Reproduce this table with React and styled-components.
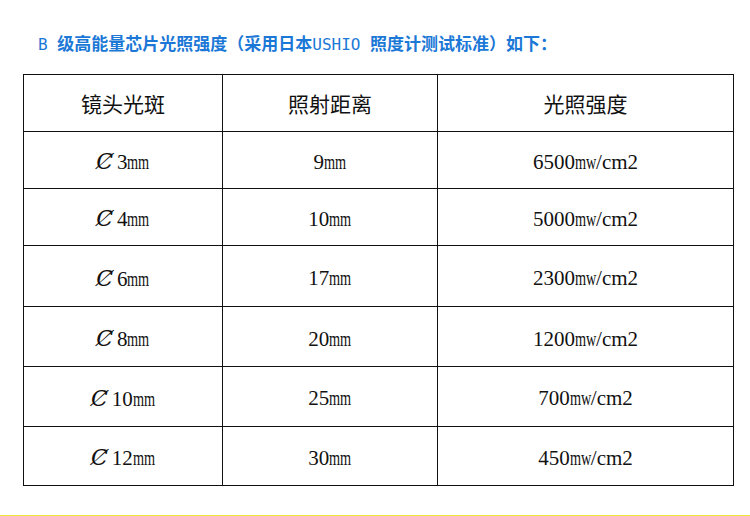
import styled, { createGlobalStyle } from "styled-components";

const GlobalStyle = createGlobalStyle`
  html, body {
    margin: 0;
    padding: 0;
    background: #fff;
  }
`;

const Page = styled.div`
  box-sizing: border-box;
  width: 750px;
  height: 516px;
  padding: 33px 0 0 0;
  border-bottom: 1px solid #f3e23a;
  display: flex;
  flex-direction: column;
`;

const Title = styled.h2`
  margin: 0 0 19px 38px;
  font-family: "Noto Sans CJK SC", sans-serif;
  font-size: 17px;
  line-height: 20px;
  font-weight: 600;
  color: #1b78d6;
  white-space: nowrap;
`;

const Latin = styled.span`
  font-family: "DejaVu Sans Mono", monospace;
  font-size: 16px;
  font-weight: 400;
`;

const Table = styled.table`
  margin-left: 23px;
  width: 710px;
  border-collapse: collapse;
  table-layout: fixed;
  border: 1.5px solid #111;
`;

const Row = styled.tr`
  height: ${(p) => p.$h}px;
`;

const HeadCell = styled.th`
  border: 1px solid #111;
  padding: 0;
  font-family: "Noto Sans CJK SC", serif;
  font-weight: 400;
  font-size: 21px;
  color: #111;
  text-align: center;
  vertical-align: middle;
`;

const Cell = styled.td`
  border: 1px solid #111;
  padding: 5px 0 0 0;
  font-family: "Liberation Serif", "DejaVu Serif", serif;
  font-size: 21px;
  color: #111;
  text-align: center;
  vertical-align: middle;
  white-space: nowrap;
`;

const Diam = styled.span`
  font-family: "DejaVu Serif", serif;
  font-style: italic;
  font-size: 22px;
  margin-right: 4px;
`;

const Narrow = styled.span`
  display: inline-block;
  transform: scaleX(0.68);
  transform-origin: 0 50%;
  margin-right: -0.49em;
`;

const rows = [
  { spot: "3", dist: "9", power: "6500", h: 56.8 },
  { spot: "4", dist: "10", power: "5000", h: 57.8 },
  { spot: "6", dist: "17", power: "2300", h: 60.8 },
  { spot: "8", dist: "20", power: "1200", h: 59.8 },
  { spot: "10", dist: "25", power: "700", h: 59.8 },
  { spot: "12", dist: "30", power: "450", h: 58.8 },
];

export default function App() {
  return (
    <>
      <GlobalStyle />
      <Page>
        <Title>
          <Latin>B </Latin>级高能量芯片光照强度（采用日本<Latin>USHIO </Latin>
          照度计测试标准）如下：
        </Title>
        <Table>
          <colgroup>
            <col style={{ width: 199 }} />
            <col style={{ width: 215 }} />
            <col style={{ width: 296 }} />
          </colgroup>
          <thead>
            <Row $h={56.8}>
              <HeadCell>镜头光斑</HeadCell>
              <HeadCell>照射距离</HeadCell>
              <HeadCell>光照强度</HeadCell>
            </Row>
          </thead>
          <tbody>
            {rows.map((r) => (
              <Row key={r.spot} $h={r.h}>
                <Cell>
                  <Diam>Ȼ</Diam>
                  {r.spot}
                  <Narrow>mm</Narrow>
                </Cell>
                <Cell>
                  {r.dist}
                  <Narrow>mm</Narrow>
                </Cell>
                <Cell>
                  {r.power}
                  <Narrow>mw</Narrow>/cm2
                </Cell>
              </Row>
            ))}
          </tbody>
        </Table>
      </Page>
    </>
  );
}
